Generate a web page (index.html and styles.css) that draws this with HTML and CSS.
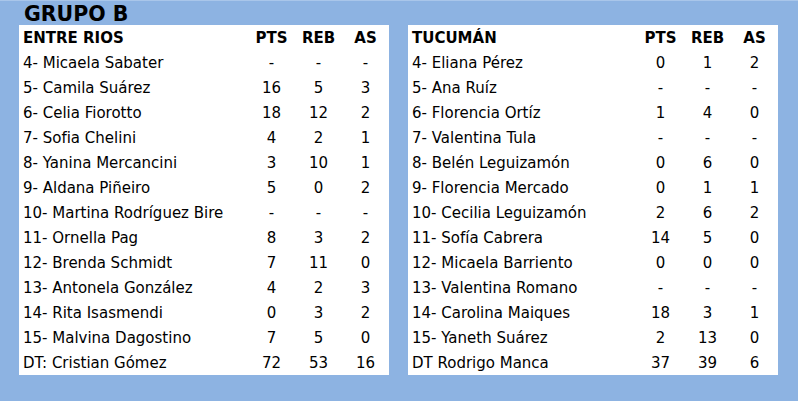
FILE: index.html
```html
<!DOCTYPE html>
<html lang="es">
<head>
<meta charset="utf-8">
<title>Grupo B</title>
<link rel="stylesheet" href="styles.css">
</head>
<body>
<div class="page">
  <h1 class="title">GRUPO B</h1>
  <div class="panels">
    <div class="panel">
      <div class="row head"><span class="name">ENTRE RIOS</span><span class="num">PTS</span><span class="num">REB</span><span class="num">AS</span></div>
      <div class="row"><span class="name">4- Micaela Sabater</span><span class="num">-</span><span class="num">-</span><span class="num">-</span></div>
      <div class="row"><span class="name">5- Camila Suárez</span><span class="num">16</span><span class="num">5</span><span class="num">3</span></div>
      <div class="row"><span class="name">6- Celia Fiorotto</span><span class="num">18</span><span class="num">12</span><span class="num">2</span></div>
      <div class="row"><span class="name">7- Sofia Chelini</span><span class="num">4</span><span class="num">2</span><span class="num">1</span></div>
      <div class="row"><span class="name">8- Yanina Mercancini</span><span class="num">3</span><span class="num">10</span><span class="num">1</span></div>
      <div class="row"><span class="name">9- Aldana Piñeiro</span><span class="num">5</span><span class="num">0</span><span class="num">2</span></div>
      <div class="row"><span class="name">10- Martina Rodríguez Bire</span><span class="num">-</span><span class="num">-</span><span class="num">-</span></div>
      <div class="row"><span class="name">11- Ornella Pag</span><span class="num">8</span><span class="num">3</span><span class="num">2</span></div>
      <div class="row"><span class="name">12- Brenda Schmidt</span><span class="num">7</span><span class="num">11</span><span class="num">0</span></div>
      <div class="row"><span class="name">13- Antonela González</span><span class="num">4</span><span class="num">2</span><span class="num">3</span></div>
      <div class="row"><span class="name">14- Rita Isasmendi</span><span class="num">0</span><span class="num">3</span><span class="num">2</span></div>
      <div class="row"><span class="name">15- Malvina Dagostino</span><span class="num">7</span><span class="num">5</span><span class="num">0</span></div>
      <div class="row"><span class="name">DT: Cristian Gómez</span><span class="num">72</span><span class="num">53</span><span class="num">16</span></div>
    </div>
    <div class="panel">
      <div class="row head"><span class="name">TUCUMÁN</span><span class="num">PTS</span><span class="num">REB</span><span class="num">AS</span></div>
      <div class="row"><span class="name">4- Eliana Pérez</span><span class="num">0</span><span class="num">1</span><span class="num">2</span></div>
      <div class="row"><span class="name">5- Ana Ruíz</span><span class="num">-</span><span class="num">-</span><span class="num">-</span></div>
      <div class="row"><span class="name">6- Florencia Ortíz</span><span class="num">1</span><span class="num">4</span><span class="num">0</span></div>
      <div class="row"><span class="name">7- Valentina Tula</span><span class="num">-</span><span class="num">-</span><span class="num">-</span></div>
      <div class="row"><span class="name">8- Belén Leguizamón</span><span class="num">0</span><span class="num">6</span><span class="num">0</span></div>
      <div class="row"><span class="name">9- Florencia Mercado</span><span class="num">0</span><span class="num">1</span><span class="num">1</span></div>
      <div class="row"><span class="name">10- Cecilia Leguizamón</span><span class="num">2</span><span class="num">6</span><span class="num">2</span></div>
      <div class="row"><span class="name">11- Sofía Cabrera</span><span class="num">14</span><span class="num">5</span><span class="num">0</span></div>
      <div class="row"><span class="name">12- Micaela Barriento</span><span class="num">0</span><span class="num">0</span><span class="num">0</span></div>
      <div class="row"><span class="name">13- Valentina Romano</span><span class="num">-</span><span class="num">-</span><span class="num">-</span></div>
      <div class="row"><span class="name">14- Carolina Maiques</span><span class="num">18</span><span class="num">3</span><span class="num">1</span></div>
      <div class="row"><span class="name">15- Yaneth Suárez</span><span class="num">2</span><span class="num">13</span><span class="num">0</span></div>
      <div class="row"><span class="name">DT Rodrigo Manca</span><span class="num">37</span><span class="num">39</span><span class="num">6</span></div>
    </div>
  </div>
</div>
</body>
</html>
```
FILE: styles.css
```css
html, body {
  margin: 0;
  padding: 0;
}
body {
  background: #8db3e2;
  font-family: "DejaVu Sans", Verdana, sans-serif;
  color: #000;
  width: 798px;
  height: 401px;
  overflow: hidden;
}
.page {
  padding: 0 20px 26px 19px;
  border-top: 1px solid #a9c6ea;
}
.title {
  margin: 0;
  height: 24px;
  padding-left: 5px;
  font-size: 20.5px;
  font-weight: bold;
  line-height: 26px;
}
.panels {
  display: grid;
  grid-template-columns: 370px 370px;
  column-gap: 19px;
}
.panel {
  background: #fff;
}
.row {
  display: grid;
  grid-template-columns: 1fr 47px 47px 47px;
  height: 25px;
  align-items: center;
  font-size: 15px;
}
.head {
  font-weight: bold;
}
.name {
  padding-left: 4px;
  white-space: nowrap;
}
.num {
  text-align: center;
}
```
